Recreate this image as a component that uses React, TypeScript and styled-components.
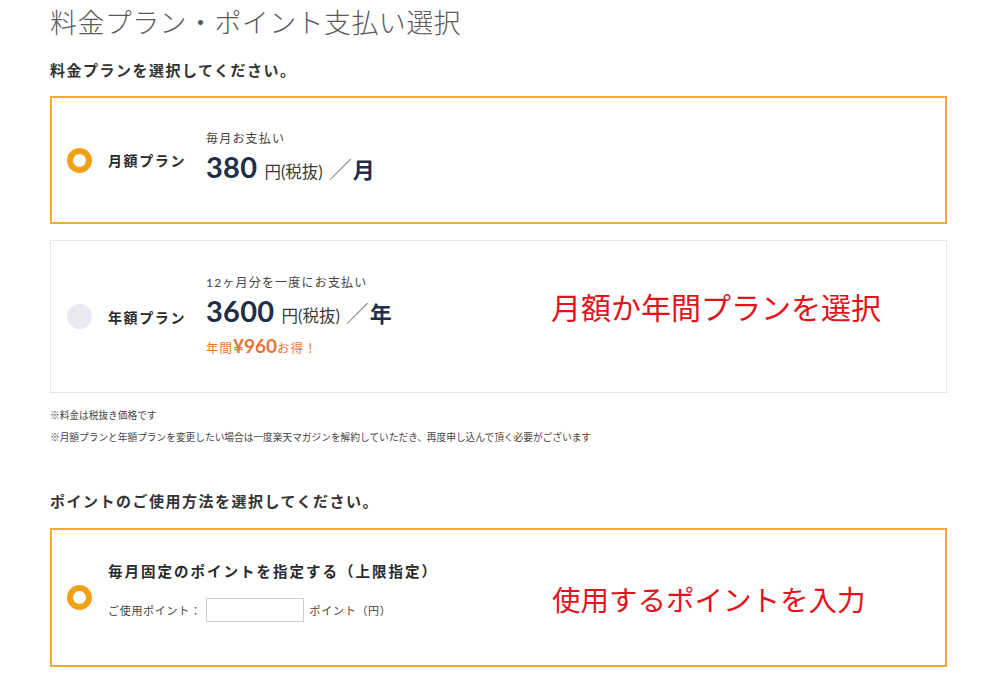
import styled, { createGlobalStyle } from "styled-components";

const GlobalStyle = createGlobalStyle`
  html, body {
    margin: 0;
    padding: 0;
    background: #ffffff;
  }
  body {
    font-family: Lato, "Noto Sans CJK JP", sans-serif;
    color: #333333;
  }
`;

const Page = styled.div`
  width: 897px;
  padding: 0 0 0 50px;
`;

const PageTitle = styled.h1`
  margin: 0;
  height: 46px;
  line-height: 46px;
  font-size: 27px;
  font-weight: 300;
  color: #5a5a5a;
  letter-spacing: 0.4px;
`;

const SectionHeading = styled.h2<{ $top: number }>`
  margin: ${(p) => p.$top}px 0 0;
  line-height: 24px;
  font-size: 15px;
  font-weight: 700;
  color: #333;
  letter-spacing: 1.5px;
`;

const Card = styled.div<{ $active?: boolean; $height: number; $top: number }>`
  position: relative;
  box-sizing: border-box;
  height: ${(p) => p.$height}px;
  margin-top: ${(p) => p.$top}px;
  border: ${(p) => (p.$active ? "2px solid #f0aa30" : "1px solid #e6e6e9")};
  background: #fff;
  display: flex;
  align-items: center;
  padding-left: ${(p) => (p.$active ? 15 : 16)}px;
`;

const Radio = styled.span<{ $checked?: boolean }>`
  box-sizing: border-box;
  width: 25px;
  height: 25px;
  border-radius: 50%;
  flex-shrink: 0;
  background: ${(p) => (p.$checked ? "#fff" : "#e9e9ef")};
  border: ${(p) => (p.$checked ? "6px solid #f2a116" : "none")};
  margin-right: 16px;
`;

const PlanName = styled.div`
  width: 98px;
  font-size: 14px;
  font-weight: 700;
  color: #2a2a2a;
  letter-spacing: 1.6px;
`;

const PriceCol = styled.div`
  display: flex;
  flex-direction: column;
`;

const Caption = styled.div`
  font-size: 12px;
  color: #444;
  letter-spacing: 1.2px;
  line-height: 18px;
`;

const PriceRow = styled.div`
  display: flex;
  align-items: baseline;
  color: #1f2f48;
  line-height: 38px;
`;

const Amount = styled.span`
  font-family: Lato, sans-serif;
  font-size: 29px;
  font-weight: 700;
  letter-spacing: 0.3px;
  margin-right: 7px;
`;

const Unit = styled.span`
  font-size: 16.5px;
  color: #3a3a3a;
  letter-spacing: 0;
  margin-right: 6px;
`;

const Per = styled.span`
  font-size: 22px;
  font-weight: 700;
  color: #1f2f48;
`;

const Slash = styled.span`
  font-weight: 300;
  color: #777;
  font-size: 23px;
  margin-right: 1px;
`;

const Deal = styled.div`
  color: #e8743a;
  font-size: 12.5px;
  line-height: 22px;
  letter-spacing: 1px;
`;

const DealAmount = styled.span`
  font-family: Lato, "Noto Sans CJK JP", sans-serif;
  font-size: 19px;
  font-weight: 700;
  letter-spacing: 0;
`;

const Notes = styled.div`
  margin-top: 11px;
`;

const Note = styled.p`
  margin: 0;
  line-height: 22px;
  font-size: 9.7px;
  color: #444;
`;

const PointCol = styled.div`
  display: flex;
  flex-direction: column;
  margin-top: -14px;
`;

const PointTitle = styled.div`
  font-size: 14.5px;
  font-weight: 700;
  color: #2a2a2a;
  letter-spacing: 2px;
  line-height: 24px;
  margin-bottom: 14px;
`;

const InputRow = styled.div`
  display: flex;
  align-items: center;
  font-size: 11px;
  color: #444;
  letter-spacing: 0.7px;
`;

const PointInput = styled.input`
  box-sizing: border-box;
  width: 98px;
  height: 24px;
  margin: 0 6px 0 4px;
  border: 1px solid #cfcfcf;
  background: #fff;
`;

const Annotation = styled.div<{ $top: number; $size: number }>`
  position: absolute;
  left: 500px;
  top: ${(p) => p.$top}px;
  line-height: 32px;
  font-family: "Noto Sans CJK JP", sans-serif;
  font-size: ${(p) => p.$size}px;
  color: #e1141e;
  white-space: nowrap;
`;

export default function App() {
  return (
    <>
      <GlobalStyle />
      <Page>
        <PageTitle>料金プラン・ポイント支払い選択</PageTitle>
        <SectionHeading $top={12}>料金プランを選択してください。</SectionHeading>

        <Card $active $height={128} $top={14}>
          <Radio $checked />
          <PlanName>月額プラン</PlanName>
          <PriceCol>
            <Caption>毎月お支払い</Caption>
            <PriceRow>
              <Amount>380</Amount>
              <Unit>円(税抜)</Unit>
              <Per>
                <Slash>／</Slash>月
              </Per>
            </PriceRow>
          </PriceCol>
        </Card>

        <Card $height={153} $top={16}>
          <Radio />
          <PlanName>年額プラン</PlanName>
          <PriceCol>
            <Caption>12ヶ月分を一度にお支払い</Caption>
            <PriceRow>
              <Amount>3600</Amount>
              <Unit>円(税抜)</Unit>
              <Per>
                <Slash>／</Slash>年
              </Per>
            </PriceRow>
            <Deal>
              年間<DealAmount>¥960</DealAmount>お得！
            </Deal>
          </PriceCol>
          <Annotation $top={49} $size={30}>
            月額か年間プランを選択
          </Annotation>
        </Card>

        <Notes>
          <Note>※料金は税抜き価格です</Note>
          <Note>
            ※月額プランと年額プランを変更したい場合は一度楽天マガジンを解約していただき、再度申し込んで頂く必要がございます
          </Note>
        </Notes>

        <SectionHeading $top={41}>
          ポイントのご使用方法を選択してください。
        </SectionHeading>

        <Card $active $height={139} $top={15}>
          <Radio $checked />
          <PointCol>
            <PointTitle>毎月固定のポイントを指定する（上限指定）</PointTitle>
            <InputRow>
              ご使用ポイント：
              <PointInput type="text" />
              ポイント（円）
            </InputRow>
          </PointCol>
          <Annotation $top={53} $size={28.5}>
            使用するポイントを入力
          </Annotation>
        </Card>
      </Page>
    </>
  );
}
